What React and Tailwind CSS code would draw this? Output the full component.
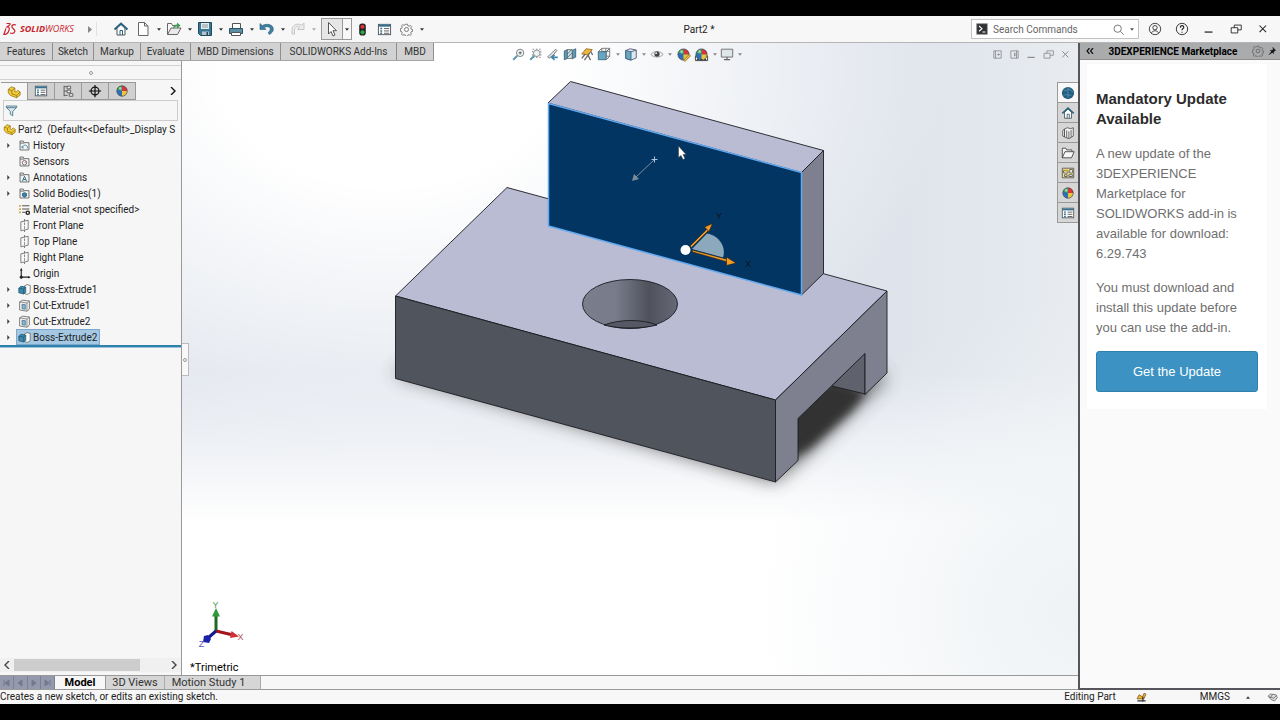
import { useState } from 'react'
import clsx from 'clsx'

const commandTabs = [
  { name: 'Features', width: 'w-[53px]' },
  { name: 'Sketch', width: 'w-[41px]' },
  { name: 'Markup', width: 'w-[47px]' },
  { name: 'Evaluate', width: 'w-[50px]' },
  { name: 'MBD Dimensions', width: 'w-[90px]' },
  { name: 'SOLIDWORKS Add-Ins', width: 'w-[116px]' },
  { name: 'MBD', width: 'w-[37px]' },
]

const treeItems = [
  { name: 'History', icon: 'history', expandable: true },
  { name: 'Sensors', icon: 'sensors' },
  { name: 'Annotations', icon: 'annotations', expandable: true },
  { name: 'Solid Bodies(1)', icon: 'bodies', expandable: true },
  { name: 'Material <not specified>', icon: 'material' },
  { name: 'Front Plane', icon: 'plane' },
  { name: 'Top Plane', icon: 'plane' },
  { name: 'Right Plane', icon: 'plane' },
  { name: 'Origin', icon: 'origin' },
  { name: 'Boss-Extrude1', icon: 'boss', expandable: true },
  { name: 'Cut-Extrude1', icon: 'cut', expandable: true },
  { name: 'Cut-Extrude2', icon: 'cut', expandable: true },
  { name: 'Boss-Extrude2', icon: 'boss', expandable: true },
]

const folder = <path d="M2.5 13.5v-11h4l1 2h6v9z M2.5 5h5" fill="#f4f4f4" stroke="#555" />
const ball = (
  <g>
    <circle cx="8" cy="8" r="6" fill="#2f6fb5" />
    <path d="M8 8V2a6 6 0 0 1 6 6z" fill="#d8343a" />
    <path d="M8 8V2a6 6 0 0 0-5.6 4z" fill="#3fa65a" />
    <path d="M8 8h6a6 6 0 0 1-6 6z" fill="#e9c53b" />
    <circle cx="8" cy="8" r="6" fill="none" stroke="#444" strokeWidth=".7" />
    <circle cx="6" cy="5" r="1.5" fill="#fff" opacity=".5" />
  </g>
)
const list = (
  <g>
    <rect x="1.5" y="2.5" width="13" height="11" fill="#fff" stroke="#4d5a63" />
    <path d="M2 4h12" stroke="#2f7090" strokeWidth="2" />
    <path d="M3.5 7h2M3.5 9.5h2M3.5 12h2" stroke="#2f7090" strokeWidth="1.6" />
    <path d="M7.5 7h5.5M7.5 9.5h5.5M7.5 12h5.5" stroke="#555" />
  </g>
)
const house = (
  <g fill="none">
    <path d="M4 7v7h8V7L8 3.5z" fill="#fff" stroke="#555" />
    <path d="M1.5 8.5 8 2.5l6.5 6" stroke="#2b6480" strokeWidth="2" />
    <path d="M7 14V9.5h2.5V14" stroke="#2b6480" />
  </g>
)
const part = (
  <g strokeLinejoin="round" stroke="#8a6a10" strokeWidth=".8">
    <path d="M1.5 5 5 2l4 1.500v4l1.500.5L12.500 6l2.500 2v3.500l-4 3-7-2.500-2.500-3z" fill="#f4cc38" />
    <path d="M1.500 5 5.500 6.500 9 3.500M5.500 6.500V10l5.500 2 4-4M11 12v2.500" fill="none" />
  </g>
)

const icons = {
  house,
  list,
  ball,
  part,
  doc: <path d="M3.5 1.5h6l3.5 3.5v9.5h-9.5z M9.5 1.5V5H13" fill="#fdfdfd" stroke="#666" />,
  open: (
    <g>
      <path d="M1.5 13.5v-11h4l1 2h5v3" fill="#f7f7f7" stroke="#666" />
      <path d="M1.5 13.5 5 7h10l-3.5 6.5z" fill="#eaeaea" stroke="#666" />
      <path d="M7 8c0-3 1.5-4.5 4-4.5V1.5L14.5 4.5 11 7.5v-2C9.5 5.5 9 6 7 8z" fill="#3f9c52" />
    </g>
  ),
  save: (
    <g>
      <path d="M1.5 1.5h13v13h-11l-2-2z" fill="#3a7794" stroke="#24485c" />
      <path d="M4 2h8v6H4z" fill="#e9edf0" />
      <path d="M5 4h6M5 6h6" stroke="#8997a0" />
      <path d="M5 10.5h7V14H5z" fill="#b8c4cb" />
      <path d="M9.5 11h1.5v3H9.5z" fill="#24485c" />
    </g>
  ),
  print: (
    <g>
      <path d="M4.5 2.5h8v5h-8z" fill="#fff" stroke="#555" />
      <path d="M1.5 7.5h13v5h-13z" fill="#5e8da3" stroke="#2a5468" />
      <path d="M3.5 11.5h9v3h-9z" fill="#fff" stroke="#555" />
    </g>
  ),
  undo: (
    <path d="M1 2.500v6h6L5.200 6.600c2.600-1.600 6-1 6 1.400 0 1.500-.8 2.500-2 3.500l1 2c2.600-1.200 4.300-3.200 4.100-5.700C14 3.500 8 2 3.200 4.600z" fill="#3f7f9f" stroke="#285c78" strokeWidth=".6" />
  ),
  redo: (
    <path d="M14 2v6.5H7.5l2.2-2.2c-3-1.6-5.2.5-5.2 2.7v4H2V9c0-5 5.5-7.5 9.7-4.7z" fill="#ececec" stroke="#bbb" strokeWidth=".8" />
  ),
  arrow: <path d="M4.5 1.5v11.5L7 10.5 9 15l2-1-2-4.3h3.5z" fill="#fff" stroke="#555" />,
  traffic: (
    <g>
      <rect x="4.5" y="1.5" width="7" height="13" rx="3" fill="#222" />
      <circle cx="8" cy="5" r="2.2" fill="#d33" />
      <circle cx="8" cy="11" r="2.2" fill="#2aa84c" />
    </g>
  ),
  gear: (
    <g fill="none" stroke="#555" strokeWidth=".9">
      <path d="M6.800 1.500h2.400l.4 1.800 1.600.7 1.600-1 1.500 1.600-1 1.500.6 1.600 1.600.4v2.200l-1.700.4-.6 1.500 1 1.600-1.600 1.400-1.500-.9-1.500.6-.4 1.600H6.800l-.4-1.700-1.500-.6-1.600 1-1.500-1.600.9-1.500-.6-1.500-1.600-.4V6.900l1.700-.5.6-1.500-1-1.500L3.400 1.900l1.500 1 1.500-.6z" />
      <circle cx="8" cy="8" r="2.500" />
    </g>
  ),
  config: (
    <g fill="none" stroke="#555">
      <path d="M3.5 2v12M3.5 3h4M3.5 8h3.5M3.5 13h4" />
      <path d="M7 2.5h4v3H7zM7 7h4v3H7zM9.5 11h4v3h-4z" fill="#eee" />
    </g>
  ),
  target: (
    <g fill="none" stroke="#111">
      <circle cx="8" cy="8" r="4.5" strokeWidth="1.4" />
      <path d="M8 1v14M1 8h14" strokeWidth="1.4" />
    </g>
  ),
  funnel: <path d="M1.5 2.5h13v1.5L9.5 9v5.5l-3-2V9l-5-5z M2 4.5h12" fill="#d9e9f0" stroke="#3a6a80" />,
  history: (
    <g>
      {folder}
      <path d="M5 11V8.5M5 11h2M5.5 10.5c.5-3 4-4 6-1.5v2.5" fill="none" stroke="#357894" />
    </g>
  ),
  sensors: (
    <g>
      {folder}
      <circle cx="8" cy="9.5" r="2.7" fill="#fff" stroke="#555" />
      <path d="m8 10 1.5-2" stroke="#c33" />
    </g>
  ),
  annotations: (
    <g>
      {folder}
      <path d="m5.5 12.5 2.5-6 2.5 6M6.5 10.5h3" fill="none" stroke="#2b6d8c" strokeWidth="1.2" />
    </g>
  ),
  bodies: (
    <g>
      {folder}
      <path d="M5.5 8 8 7l2.5 1v3L8 12.5 5.5 11z" fill="#3b86a8" stroke="#245a74" />
    </g>
  ),
  material: (
    <g fill="none">
      <path d="M5 3.5h9M5 7.5h9M5 11.5h4" stroke="#555" strokeWidth="1.3" />
      <path d="M1.5 3.5h2M1.5 7.5h2M1.5 11.5h2" stroke="#c9a227" strokeWidth="2" />
      <circle cx="12" cy="12" r="2" stroke="#222" strokeWidth="1.8" />
    </g>
  ),
  plane: (
    <g fill="none" stroke="#666">
      <path d="M3.5 3.5v11l9-2v-11z" fill="#f9f9f9" />
      <path d="M8 0v16" strokeDasharray="3 1.5" />
    </g>
  ),
  origin: (
    <g stroke="#222" fill="#222">
      <path d="M4 3v9.5h10" fill="none" strokeWidth="1.4" />
      <path d="M4 1 2.5 4.5h3zM15.5 12.5l-3-1.5v3z" stroke="none" />
      <circle cx="4" cy="12.5" r="1.5" />
    </g>
  ),
  boss: (
    <g strokeLinejoin="round">
      <path d="m8 3.5 3-1.5 4 1v9l-3.5 2L8 13z" fill="#fff" stroke="#666" />
      <path d="M1 6.5 3.5 4l6 1v6.5L7 13.5l-6-1.5z" fill="#3d8aaa" stroke="#235c76" />
      <path d="M1 6.5 7 7.5v6M7 7.5 9.5 5" fill="none" stroke="#235c76" />
    </g>
  ),
  cut: (
    <g strokeLinejoin="round">
      <path d="M2 3.500 6 1.500l8 1v10l-3 2.500-9-1.500z" fill="#f4f4f4" stroke="#666" />
      <path d="M2 3.500 11 5v10M11 5l3-2.500" fill="none" stroke="#777" />
      <path d="M5 6.500 9 7v5.500L5 12z" fill="#8fb9cb" stroke="#3f7690" />
    </g>
  ),
  zoomFit: (
    <g fill="none">
      <circle cx="10" cy="6" r="4.5" fill="#f4f8fa" stroke="#666" />
      <path d="M8 6h4M10 4v4" stroke="#444" />
      <path d="m6.5 9.5-5 5" stroke="#5c98b4" strokeWidth="2.4" />
    </g>
  ),
  zoomArea: (
    <g fill="none">
      <path d="M4.5 1.5h10v10h-10z" stroke="#777" strokeDasharray="2 2" />
      <circle cx="9.5" cy="6.5" r="4" fill="#eef3f5" stroke="#777" />
      <path d="m6.5 9.5-5 5" stroke="#5c98b4" strokeWidth="2.4" />
    </g>
  ),
  previous: (
    <g>
      <path d="m12 1.5 1.5 1.5-4 5-5.5 4.5-2-1.5L7 6z" fill="#e4e4e4" stroke="#666" />
      <path d="M14.5 11.5H8M10.5 8.5 7 11.5l3.5 3" fill="none" stroke="#3f88aa" strokeWidth="2" />
    </g>
  ),
  section: (
    <g>
      <path d="M1.5 4.5 5 3v10l-3.5 1.5zM10.5 4l4-2v9.5l-4 2z" fill="#5d9ab6" stroke="#35667e" />
      <path d="M5 3h5.5v10H5z" fill="#d9e3e8" stroke="#666" />
      <path d="m5 8 5-5M5 12l5.5-5.5" stroke="#35667e" />
    </g>
  ),
  annoView: (
    <g>
      <path d="m2 8 5-6 7 1-5 6z" fill="#f0b642" stroke="#97691a" />
      <path d="M2 13 6 8M5 15l6-8M9 9l3 6M12 5l2.500 4" fill="none" stroke="#666" strokeWidth="1.4" />
    </g>
  ),
  viewCube: (
    <g>
      <path d="M5.5 1.5h9v9h-9zM10 1.5v9M5.5 5h9" fill="#f5f5f5" stroke="#777" />
      <path d="M1.5 5.5h9v9h-9z" fill="#6aa6c0" stroke="#35667e" />
      <path d="m1.5 5.5 4-4M10.5 5.5l4-4M10.5 14.5l4-4" stroke="#555" />
    </g>
  ),
  display: (
    <g strokeLinejoin="round">
      <path d="M2 4 7 2l7 1.5v9L8 15l-6-2z" fill="#dce9ef" stroke="#557" />
      <path d="M2 4l6 1.5V15l-6-2z" fill="#6aa6c0" stroke="#35667e" />
      <path d="m8 5.5 6-2" stroke="#557" />
    </g>
  ),
  eye: (
    <g>
      <path d="M1 8.5C4 4 12 4 15 8.5 12 12.5 4 12.5 1 8.5z" fill="#f2f2f2" stroke="#999" />
      <circle cx="8" cy="8" r="3" fill="#444" />
      <circle cx="7" cy="7" r="1" fill="#fff" />
    </g>
  ),
  appearance: (
    <g>
      {ball}
      <path d="m8 14 6-6 1.5 1.5-6 6z" fill="#eec04a" stroke="#7d5d18" strokeWidth=".7" />
    </g>
  ),
  scene: (
    <g>
      <path d="M1.5 9.5h13v5h-13z" fill="#eee" stroke="#444" />
      {ball}
      <path d="M3 13.5h2M7 13.5h2M11 13.5h2" stroke="#333" strokeWidth="1.5" />
    </g>
  ),
  monitor: (
    <g>
      <path d="M1.5 2.5h13v9h-13z" fill="#dfe6ea" stroke="#666" />
      <path d="M8 11.5V14M4.5 14.5h7" stroke="#666" strokeWidth="1.4" />
    </g>
  ),
  globe: (
    <g>
      <circle cx="8" cy="8" r="7" fill="#245f80" />
      <path d="M3 5c3 2 4-2 7-1s2 3 4 3M3 11c3-3 5 1 9-1M8 2v12" fill="none" stroke="#63a4bf" strokeWidth=".7" />
    </g>
  ),
  library: (
    <g fill="#f5f5f5" stroke="#555" strokeLinejoin="round">
      <path d="m2 5 2-1.5v9L2 11.5zM4 3.5 7 2l4 1 3-1v9.5l-5 3-5-2z" />
      <path d="M6.5 5v8.5M9 6v8.5M11.5 4.5v8.5" />
    </g>
  ),
  folderOpen: (
    <path d="M1.5 13.5v-11h4l1 2h6v2M1.5 13.5 4.5 6.5h10.5l-3 7z" fill="#f7f7f7" stroke="#444" strokeLinejoin="round" />
  ),
  palette: (
    <g>
      <path d="M1.5 2.5h13v11h-13z" fill="#f3e28c" stroke="#555" />
      <path d="M3 5h5v3H3zM10 4h3v4h-3zM4 10h3v2H4zM9 10h4v2H9z" fill="#fff" stroke="#555" />
      <path d="M4 5.5h4" stroke="#caa51e" strokeWidth="2" />
    </g>
  ),
  user: (
    <g fill="none" stroke="#333">
      <circle cx="8" cy="8" r="6.5" />
      <circle cx="8" cy="6.5" r="2.5" />
      <path d="M4 13c.5-4 7.5-4 8 0" />
    </g>
  ),
  help: (
    <g fill="none" stroke="#222">
      <circle cx="8" cy="8" r="6.5" />
      <path d="M6 6.5c0-3 4-3 4-.5 0 1.500-2 1.500-2 3.500M8 11v1.300" strokeWidth="1.3" />
    </g>
  ),
  minimize: <path d="M3 11.5h9" stroke="currentColor" strokeWidth="1.4" />,
  restore: (
    <path d="M2.5 6.5h7.500v6H2.500zM6 6.500V3.500h8v5.500h-4" fill="none" stroke="currentColor" />
  ),
  close: <path d="m4 4 7.500 7.500M11.500 4 4 11.500" stroke="currentColor" strokeWidth="1.2" />,
  dockLeft: <path d="M3.5 3.500h9v9h-9zM5.500 3.500v9M11 8H8M9.500 6.500 8 8l1.500 1.500" fill="none" stroke="currentColor" />,
  dockRight: <path d="M3.5 3.500h9v9h-9zM10.500 3.500v9M8 6l2 2-2 2z" fill="none" stroke="currentColor" />,
  pin: <path d="m9 2 5 5-1.500.5-2 2 .3 3L8.500 10.500 3 14l4-5-2-2.200 3 .2 2-2z" fill="#111" stroke="#111" strokeWidth=".5" />,
  prompt: (
    <g>
      <rect x="1" y="1" width="14" height="14" fill="#2f3133" stroke="#888" />
      <path d="m4 4 4 3.500L4 11M8.500 12h4" fill="none" stroke="#fff" strokeWidth="1.5" />
    </g>
  ),
  search: (
    <g fill="none" stroke="#777" strokeWidth="1.2">
      <circle cx="7" cy="7" r="4.500" />
      <path d="m10.500 10.500 4 4" />
    </g>
  ),
  rebuild: (
    <g>
      <path d="m1.500 10 3-6 5 3 2-5 3 1-3 7z" fill="#f0b633" stroke="#6b4a12" />
      <path d="M2 13h12M10 7v7" stroke="#333" strokeWidth="1.8" />
    </g>
  ),
  tag: (
    <path d="M1.500 6 5 3l8 1 2 4-4 5-5-2zM3 7l7 2M10 9l4-4M8 3.500 5 8" fill="#ddd" stroke="#555" />
  ),
}

function Icon({ name, className = 'size-4' }) {
  return (
    <svg viewBox="0 0 16 16" className={clsx('shrink-0', className)} aria-hidden="true">
      {icons[name]}
    </svg>
  )
}

function IconButton({ icon, label, size, className }) {
  return (
    <button type="button" aria-label={label} className={clsx('flex shrink-0 items-center justify-center', className)}>
      <Icon name={icon} className={size} />
    </button>
  )
}

function Caret({ label, className = 'w-[15px] text-[#333]' }) {
  return (
    <button type="button" aria-label={label} className={clsx('flex shrink-0 items-center justify-center', className)}>
      <svg viewBox="0 0 6 4" className="h-[3px] w-1" aria-hidden="true">
        <path d="M0 0h6L3 4z" fill="currentColor" />
      </svg>
    </button>
  )
}

function TitleBar() {
  return (
    <header className="flex h-[27px] shrink-0 items-center border-b border-[#b5b5b5] bg-[#f7f7f7]">
      <div className="flex flex-[17] items-center">
        <div className="flex w-[97px] items-center border-r border-[#e2e2e2] pl-[3px]">
          <svg viewBox="0 0 14 14" className="size-[14px]" aria-hidden="true">
            <path
              d="M3.500 1.500h3c1 0 .8 1-.5 2L4 5c2 0 2.800 1 2 3.200C5.200 10.800 3 12.500.8 12.500L3 6.500M13 3c-2.500-1-4.500 0-4 2s3.500 2.500 2.800 4.500-2.800 2.200-4.800 1.500"
              fill="none"
              stroke="#c9252c"
              strokeWidth="1.2"
            />
          </svg>
          <span className="ml-[3px] font-['Open_Sans',sans-serif] text-[9px] italic text-[#c9252c]">
            <b>SOLID</b>WORKS
          </span>
          <button type="button" aria-label="Show menu" className="ml-auto mr-1">
            <svg viewBox="0 0 4 7" className="h-[7px] w-1" aria-hidden="true">
              <path d="M0 0v7l4-3.500z" fill="#888" />
            </svg>
          </button>
        </div>
        <nav className="ml-4 flex items-center" aria-label="Quick access">
          <IconButton icon="house" label="Home" className="mr-[6px]" />
          <IconButton icon="doc" label="New" />
          <Caret label="New options" />
          <IconButton icon="open" label="Open" />
          <Caret label="Open options" />
          <IconButton icon="save" label="Save" />
          <Caret label="Save options" />
          <IconButton icon="print" label="Print" />
          <Caret label="Print options" />
          <IconButton icon="undo" label="Undo" />
          <Caret label="Undo options" />
          <IconButton icon="redo" label="Redo" />
          <Caret label="Redo options" className="w-[15px] text-[#aaa]" />
          <div className="flex h-[22px] border border-[#999]">
            <IconButton icon="arrow" label="Select" className="w-[21px] border-r border-[#999] bg-[#e6e6e6]" />
            <Caret label="Select options" className="w-2 text-[#333]" />
          </div>
          <IconButton icon="traffic" label="Rebuild" size="size-[15px]" className="ml-[3px]" />
          <IconButton icon="list" label="File properties" size="size-[15px]" className="ml-[7px]" />
          <IconButton icon="gear" label="Options" size="size-[13px]" className="ml-2" />
          <Caret label="More options" className="w-[17px] text-[#333]" />
        </nav>
      </div>
      <h1 className="w-[60px] shrink-0 text-center text-[10px]">Part2 *</h1>
      <div className="flex flex-[14] items-center justify-end">
        <form className="flex h-5 w-[168px] items-center border border-[#c3c3c3] bg-white pl-1" onSubmit={(e) => e.preventDefault()}>
          <Icon name="prompt" className="size-3" />
          <input
            aria-label="Search Commands"
            placeholder="Search Commands"
            className="ml-[5px] w-0 flex-1 bg-transparent text-[10px] outline-none placeholder:text-[#666]"
          />
          <IconButton icon="search" label="Search" size="size-[13px]" />
          <Caret label="Search options" className="w-[13px] text-[#555]" />
        </form>
        <IconButton icon="user" label="Account" size="size-[14px]" className="ml-[9px]" />
        <IconButton icon="help" label="Help" size="size-[14px]" className="ml-[13px]" />
        <IconButton icon="minimize" label="Minimize" size="size-[14px]" className="ml-[13px]" />
        <IconButton icon="restore" label="Restore" size="size-[14px]" className="ml-[13px]" />
        <IconButton icon="close" label="Close" size="size-[14px]" className="ml-[13px] mr-[10px]" />
      </div>
    </header>
  )
}

function CommandRow() {
  return (
    <div className="flex h-[18px] shrink-0 items-stretch">
      <nav className="flex shrink-0 border-b border-[#a5a5a5] bg-[#d2d2d2]" aria-label="Command manager">
        {commandTabs.map((tab) => (
          <button
            key={tab.name}
            type="button"
            className={clsx('border-r border-[#8f8f8f] text-center text-[10px] leading-4 whitespace-nowrap text-[#333]', tab.width)}
          >
            {tab.name}
          </button>
        ))}
      </nav>
      <div className="flex flex-1 items-center pt-1 pl-[78px] text-[#888]">
        <IconButton icon="zoomFit" label="Zoom to fit" size="size-[13px]" />
        <IconButton icon="zoomArea" label="Zoom to area" size="size-[13px]" className="ml-1" />
        <IconButton icon="previous" label="Previous view" size="size-[13px]" className="ml-1" />
        <IconButton icon="section" label="Section view" size="size-[14px]" className="ml-1" />
        <IconButton icon="annoView" label="Annotation views" size="size-[14px]" className="ml-[3px]" />
        <IconButton icon="viewCube" label="View orientation" size="size-[14px]" className="ml-[3px]" />
        <Caret label="Orientation list" className="w-[13px]" />
        <IconButton icon="display" label="Display style" size="size-[14px]" />
        <Caret label="Display style list" className="w-[12px]" />
        <IconButton icon="eye" label="Hide and show items" size="size-[14px]" />
        <Caret label="Item list" className="w-[12px]" />
        <IconButton icon="appearance" label="Edit appearance" size="size-[15px]" />
        <IconButton icon="scene" label="Apply scene" size="size-[15px]" className="ml-[3px]" />
        <Caret label="Scene list" className="w-[11px]" />
        <IconButton icon="monitor" label="View settings" size="size-[14px]" />
        <Caret label="View settings list" className="w-[12px]" />
        <div className="ml-auto flex gap-[4px] pr-[6px]">
          <IconButton icon="dockLeft" label="Pane left" size="size-[13px]" />
          <IconButton icon="dockRight" label="Pane right" size="size-[13px]" />
          <IconButton icon="minimize" label="Minimize document" size="size-[13px]" />
          <IconButton icon="restore" label="Restore document" size="size-[13px]" />
          <IconButton icon="close" label="Close document" size="size-[13px]" />
        </div>
      </div>
    </div>
  )
}

function FeatureTree() {
  const [selected, setSelected] = useState('Boss-Extrude2')
  const tabs = [
    ['part', 'Feature tree'],
    ['list', 'Properties'],
    ['config', 'Configurations'],
    ['target', 'Dimensions'],
    ['ball', 'Display'],
  ]

  return (
    <aside className="flex w-[182px] shrink-0 flex-col border-r border-[#999] bg-[#f6f6f6]">
      <div className="mt-1 flex h-[15px] shrink-0 items-center justify-center border-y border-[#d2d2d2]">
        <span className="size-1 rounded-full border border-[#999]" />
      </div>
      <div className="mt-[2px] flex h-[18px] shrink-0 items-stretch pl-px">
        {tabs.map(([icon, label], i) => (
          <IconButton
            key={label}
            icon={icon}
            label={label}
            size="size-[14px]"
            className={clsx('w-[27px] border-t border-r border-[#999]', i === 0 ? 'bg-[#f6f6f6]' : 'border-b bg-[#d0d0d0]')}
          />
        ))}
        <button type="button" aria-label="More tabs" className="ml-auto mr-[5px]">
          <svg viewBox="0 0 6 8" className="h-2 w-[6px]" aria-hidden="true">
            <path d="m1 0 4 4-4 4" fill="none" stroke="#111" strokeWidth="1.4" />
          </svg>
        </button>
      </div>
      <label className="mx-[3px] flex h-[21px] shrink-0 items-center border border-[#ccc] pl-px">
        <Icon name="funnel" className="size-[13px]" />
        <input aria-label="Filter" className="w-0 flex-1 bg-transparent text-[10px] outline-none" />
      </label>
      <div className="flex h-4 shrink-0 items-center pl-[3px] text-[10px] whitespace-pre">
        <Icon name="part" className="mr-[2px] size-[13px]" />
        {'Part2  (Default<<Default>_Display S'}
      </div>
      <ul>
        {treeItems.map((item) => (
          <li key={item.name} className="flex h-4 items-center">
            <span className="flex w-4 shrink-0 justify-center">
              {item.expandable && (
                <svg viewBox="0 0 3 6" className="h-[5px] w-[3px]" aria-hidden="true">
                  <path d="M0 0v6l3-3z" fill="#444" />
                </svg>
              )}
            </span>
            <button
              type="button"
              onClick={() => setSelected(item.name)}
              className={clsx(
                'flex h-4 items-center gap-[2px] border pr-[2px] pl-px text-[10px] whitespace-nowrap',
                selected === item.name ? 'border-[#7fa9cc] bg-[#a4c8e4]' : 'border-transparent'
              )}
            >
              <Icon name={item.icon} className="size-[13px]" />
              {item.name}
            </button>
          </li>
        ))}
      </ul>
      <div className="h-[3px] shrink-0 border-b border-[#9cc3da] bg-[#2f82ad]" />
      <div className="mt-auto mb-[3px] flex h-[14px] shrink-0 items-center gap-1 bg-[#f0f0f0] px-[4px]">
        <ScrollArrow label="Scroll left" d="M5 0 1 4l4 4" />
        <div className="h-3 w-[126px] bg-[#cdcdcd]" />
        <ScrollArrow label="Scroll right" d="m1 0 4 4-4 4" className="ml-auto" />
      </div>
    </aside>
  )
}

function ScrollArrow({ label, d, className }) {
  return (
    <button type="button" aria-label={label} className={className}>
      <svg viewBox="0 0 6 8" className="h-2 w-[6px]" aria-hidden="true">
        <path d={d} fill="none" stroke="#444" strokeWidth="1.4" />
      </svg>
    </button>
  )
}

function Model() {
  return (
    <svg viewBox="182 61 896 614" className="block size-full" role="img" aria-label="Part model">
      <defs>
        <filter id="soft" x="-20%" y="-20%" width="140%" height="140%">
          <feGaussianBlur stdDeviation="9" />
        </filter>
        <filter id="softer" x="-40%" y="-40%" width="180%" height="180%">
          <feGaussianBlur stdDeviation="5" />
        </filter>
        <linearGradient id="bore" x1="0" x2="1">
          <stop offset="0" stopColor="#7b7e8d" />
          <stop offset=".35" stopColor="#787b8a" />
          <stop offset=".7" stopColor="#4f525c" />
          <stop offset="1" stopColor="#666976" />
        </linearGradient>
      </defs>

      <path d="M394 374 775 482 806 456 888 378 800 330 500 300z" fill="#444" opacity=".75" filter="url(#soft)" />
      <path d="M785 405 832 380 866 392 852 410 810 448 785 462z" fill="#333" filter="url(#softer)" />

      {/* base block */}
      <g stroke="#1c1c22" strokeLinejoin="round" strokeWidth=".9">
        <path d="M865 353v41l-33-8z" fill="#5f626c" />
        <path d="M395.500 296 507 187.500 887 291 775.500 400z" fill="#b9bcd2" />
        <path d="M395.500 296 775.500 400v82L395.500 378.500z" fill="#50545d" />
        <path d="M775.500 400 887 291v82l-22 21.500v-41l-67 65v42l-22.500 21.500z" fill="#7e8090" />
        <ellipse cx="630" cy="304" rx="47.500" ry="24.500" fill="url(#bore)" />
        <path d="M604 325c16-6 38-6 53 0-16 4-38 4-53 0z" fill="#565963" />
      </g>

      {/* upright plate */}
      <g stroke="#1c1c22" strokeLinejoin="round" strokeWidth=".9">
        <path d="M548 103 570.500 81.500 823.500 150.500 801.500 172.500z" fill="#b9bcd2" />
        <path d="M823.500 150.500v123l-22 21.500V172.500z" fill="#7e8090" />
        <path d="M548.500 103.500 801.500 172.500V295L548.500 226z" fill="#033563" stroke="#62a9f0" strokeWidth="1.5" />
      </g>

      <g stroke="#7c8c9a" fill="#7c8c9a">
        <path d="m654 160-18 17" />
        <path d="M654.500 156.500v6M651.500 159.500h6" stroke="#a9c4dc" />
        <path d="m632 181 2-7 5 5z" stroke="none" />
      </g>
      <path d="m692 249 15-15.500c10 1 20 12 16 24z" fill="#8ba8bd" />
      <g stroke="#1d1d1d" strokeWidth=".6" fill="#f39a26">
        <path d="m690 246 17-17 1.500 1.500-17 17z" />
        <path d="m712.500 223.500-8 3.500 4.500 4.500z" />
        <path d="m692 250 36 9.500-.5 2.500-35-10z" />
        <path d="m736 263-9.500-6v8.500z" />
      </g>
      <circle cx="685.500" cy="250" r="5" fill="#fff" />
      <g fontFamily="Liberation Sans, sans-serif" fontSize="9" textAnchor="middle" fill="#111">
        <text x="719" y="219">Y</text>
        <text x="748" y="267">X</text>
      </g>
      <path d="M678.500 146v11.500l2.500-2 2 4 2-1-2-4h3z" fill="#fff" stroke="#444" strokeWidth=".6" />

      {/* view triad */}
      <g>
        <path d="M216 631v-16" stroke="#1a6a24" strokeWidth="3" />
        <path d="m216 608 4 8.500h-8z" fill="#2f9a3a" />
        <path d="m216 631 15 3.500" stroke="#a5141c" strokeWidth="3" />
        <path d="m239 636.500-9 1.500 1.500-7z" fill="#cf2f36" />
        <path d="m216 631-8 7" stroke="#141a8f" strokeWidth="3" />
        <path d="m203 642 1-6 4-1 3 4-2 4z" fill="#1c22a8" />
      </g>
      <g fontFamily="Liberation Sans, sans-serif" fontSize="9" textAnchor="middle">
        <text x="215.500" y="608" fill="#4d9a55">Y</text>
        <text x="240.500" y="640" fill="#b0575b">X</text>
        <text x="201.500" y="647" fill="#5458b8">Z</text>
      </g>
    </svg>
  )
}

function Viewport() {
  const paneTabs = [
    ['globe', '3DEXPERIENCE Marketplace'],
    ['house', 'Resources'],
    ['library', 'Design library'],
    ['folderOpen', 'File explorer'],
    ['palette', 'View palette'],
    ['ball', 'Appearances'],
    ['list', 'Custom properties'],
  ]

  return (
    <main className="relative min-w-0 flex-1">
      <div className="absolute inset-0">
        <Model />
      </div>
      <button type="button" aria-label="Collapse panel" className="absolute top-[282px] left-0 flex h-[33px] w-[7px] items-center justify-center border border-l-0 border-[#bbb] bg-[#f8f8f8]">
        <span className="size-1 rounded-full border border-[#999]" />
      </button>
      <div className="absolute top-[21px] right-0 flex w-[21px] flex-col border-t border-l border-[#999]">
        {paneTabs.map(([icon, label], i) => (
          <IconButton
            key={label}
            icon={icon}
            label={label}
            size="size-[14px]"
            className={clsx('h-5 border-b border-[#999]', i === 0 ? 'bg-[#f8f8f8]' : 'bg-[#d6d6d6]')}
          />
        ))}
      </div>
      <p className="absolute bottom-0 left-2 text-[11px] leading-[14px] text-black">*Trimetric</p>
    </main>
  )
}

function BottomTabs() {
  const arrows = ['M2 1v6M7 1 3 4l4 3z', 'M6 1 2 4l4 3z', 'M2 1l4 3-4 3z', 'M6 1v6M1 1l4 3-4 3z']
  const labels = ['First tab', 'Previous tab', 'Next tab', 'Last tab']

  return (
    <div className="flex h-[15px] shrink-0 border-y border-[#999] bg-[#f7f7f7] text-[11px] leading-[13px] text-[#333]">
      <div className="flex w-[55px] bg-[#9499ac]">
        {arrows.map((d, i) => (
          <button key={d} type="button" aria-label={labels[i]} className="flex flex-1 items-center justify-center border-r border-[#7c8195]">
            <svg viewBox="0 0 8 8" className="size-2" aria-hidden="true">
              <path d={d} fill="#74798e" stroke="#74798e" />
            </svg>
          </button>
        ))}
      </div>
      <button type="button" className="w-[51px] border-r border-[#999] font-bold text-black">Model</button>
      <button type="button" className="w-[59px] border-r border-[#aaa] bg-[#d6d6d6]">3D Views</button>
      <button type="button" className="w-[96px] border-r border-[#aaa] bg-[#d6d6d6] pr-2">Motion Study 1</button>
    </div>
  )
}

function TaskPane() {
  return (
    <aside className="flex w-[202px] shrink-0 flex-col border-b-2 border-l-2 border-[#55555b] bg-[#fafafa]">
      <div className="flex h-[17px] shrink-0 items-center border-b border-[#8e8e8e] bg-[#a9abad] text-black">
        <button type="button" aria-label="Collapse pane" className="ml-[6px] pb-px">
          <svg viewBox="0 0 8 6" className="h-[6px] w-2" aria-hidden="true">
            <path d="M3.500 0 1 3l2.500 3M7 0 4.500 3 7 6" fill="none" stroke="#111" strokeWidth="1.2" />
          </svg>
        </button>
        <h2 className="flex-1 text-center text-[10px] font-bold whitespace-nowrap">3DEXPERIENCE Marketplace</h2>
        <IconButton icon="gear" label="Pane settings" size="size-3" />
        <IconButton icon="pin" label="Pin pane" size="size-[10px]" className="mr-[3px] ml-[3px]" />
      </div>
      <section className="mt-1 mr-[13px] ml-[7px] bg-white px-[9px] pt-[25px] pb-[17px] font-['Liberation_Sans',sans-serif] text-[13px] leading-5 text-[#6f6f6f]">
        <h3 className="text-[15px] leading-5 font-bold text-[#2c2c2c]">Mandatory Update Available</h3>
        <p className="mt-[15px]">
          A new update of the 3DEXPERIENCE Marketplace for SOLIDWORKS add-in is available for download: 6.29.743
        </p>
        <p className="mt-[14px]">You must download and install this update before you can use the add-in.</p>
        <button type="button" className="mt-[13px] h-[41px] w-full rounded-[3px] border border-[#2f80ad] bg-[#3c92c2] text-white">
          Get the Update
        </button>
      </section>
    </aside>
  )
}

export default function App() {
  return (
    <div className="flex h-screen flex-col overflow-hidden border-t-16 border-b-16 border-black bg-[#f7f7f7] font-['Roboto',sans-serif] text-[#222]">
      <TitleBar />
      <div className="flex min-h-0 flex-1">
        <div className="flex min-w-0 flex-1 flex-col">
          <div className="flex min-h-0 flex-1 flex-col bg-white bg-[radial-gradient(ellipse_30%_50%_at_100%_90%,#eef2f5,transparent),linear-gradient(to_bottom,transparent_52%,#fff_76%),radial-gradient(ellipse_52%_62%_at_36%_4%,#fff_30%,transparent),linear-gradient(to_right,#dfe4ec_84%,#e8ecf0)]">
            <CommandRow />
            <div className="flex min-h-0 flex-1">
              <FeatureTree />
              <Viewport />
            </div>
          </div>
          <BottomTabs />
        </div>
        <TaskPane />
      </div>
      <footer className="flex h-[14px] shrink-0 items-center text-[10px] leading-[14px]">
        <span>Creates a new sketch, or edits an existing sketch.</span>
        <span className="ml-auto">Editing Part</span>
        <Icon name="rebuild" className="ml-5 size-[11px]" />
        <span className="ml-[53px]">MMGS</span>
        <svg viewBox="0 0 6 4" className="ml-4 h-[3px] w-1" aria-hidden="true">
          <path d="M0 4h6L3 0z" fill="#333" />
        </svg>
        <Icon name="tag" className="mr-[2px] ml-[17px] size-[11px]" />
      </footer>
    </div>
  )
}
